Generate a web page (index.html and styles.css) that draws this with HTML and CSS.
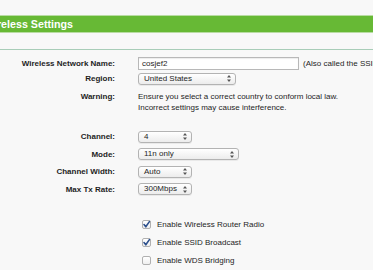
FILE: index.html
```html
<!DOCTYPE html>
<html lang="en">
<head>
    <meta charset="UTF-8">
    <meta name="viewport" content="width=device-width, initial-scale=1.0">
    <title>Wireless Settings</title>
    <link rel="stylesheet" href="styles.css">
</head>
<body>

    <div class="title-bar">
        <h1>Wireless Settings</h1>
    </div>
    <div class="title-rule"></div>

    <div class="settings">
        <div class="row row-name">
            <label class="field-label">Wireless Network Name:</label>
            <div class="text-input">cosjef2</div>
            <span class="hint">(Also called the SSID)</span>
        </div>
        <div class="row row-region">
            <label class="field-label">Region:</label>
            <div class="select select-region">
                <span>United States</span>
                <svg class="arrows" width="4" height="7" viewBox="0 0 4 7"><path d="M2 0 L4 2.6 L0 2.6 Z M0 4.4 L4 4.4 L2 7 Z"/></svg>
            </div>
        </div>
        <div class="row row-warning">
            <label class="field-label">Warning:</label>
            <p class="warning-text">Ensure you select a correct country to conform local law.<br>Incorrect settings may cause interference.</p>
        </div>

        <div class="radio-group">
            <div class="row row-select">
                <label class="field-label">Channel:</label>
                <div class="select select-sm">
                    <span>4</span>
                    <svg class="arrows" width="4" height="7" viewBox="0 0 4 7"><path d="M2 0 L4 2.6 L0 2.6 Z M0 4.4 L4 4.4 L2 7 Z"/></svg>
                </div>
            </div>
            <div class="row row-select">
                <label class="field-label">Mode:</label>
                <div class="select select-mode">
                    <span>11n only</span>
                    <svg class="arrows" width="4" height="7" viewBox="0 0 4 7"><path d="M2 0 L4 2.6 L0 2.6 Z M0 4.4 L4 4.4 L2 7 Z"/></svg>
                </div>
            </div>
            <div class="row row-select">
                <label class="field-label">Channel Width:</label>
                <div class="select select-sm">
                    <span>Auto</span>
                    <svg class="arrows" width="4" height="7" viewBox="0 0 4 7"><path d="M2 0 L4 2.6 L0 2.6 Z M0 4.4 L4 4.4 L2 7 Z"/></svg>
                </div>
            </div>
            <div class="row row-select">
                <label class="field-label">Max Tx Rate:</label>
                <div class="select select-sm">
                    <span>300Mbps</span>
                    <svg class="arrows" width="4" height="7" viewBox="0 0 4 7"><path d="M2 0 L4 2.6 L0 2.6 Z M0 4.4 L4 4.4 L2 7 Z"/></svg>
                </div>
            </div>
        </div>

        <div class="checks">
            <div class="check-row">
                <span class="checkbox checked">
                    <svg width="9" height="9" viewBox="0 0 9 9"><path d="M2 4.6 L3.8 6.8 L7.4 1.6" /></svg>
                </span>
                <span>Enable Wireless Router Radio</span>
            </div>
            <div class="check-row">
                <span class="checkbox checked">
                    <svg width="9" height="9" viewBox="0 0 9 9"><path d="M2 4.6 L3.8 6.8 L7.4 1.6" /></svg>
                </span>
                <span>Enable SSID Broadcast</span>
            </div>
            <div class="check-row">
                <span class="checkbox"></span>
                <span>Enable WDS Bridging</span>
            </div>
        </div>
    </div>

</body>
</html>
```

FILE: styles.css
```css
:root {
    --tp-green: #67b935;
    --rule-green: #a8cdb8;
    --page-bg: #f8f8f8;
    --text-dark: #1e1e1e;
    --field-border: #b8b8b8;
}

body {
    margin: 0;
    background-color: var(--page-bg);
    font-family: "Liberation Sans", Arial, sans-serif;
    font-size: 8px;
    color: var(--text-dark);
    overflow: hidden;
}

/* Green section header */
.title-bar {
    margin-top: 16px;
    height: 16px;
    background-color: var(--tp-green);
    box-shadow: 0 -1px 0 #b9dca3, 0 1px 0 #b9dca3;
    overflow: hidden;
}

.title-bar h1 {
    margin: 0 0 0 -16px;
    font-size: 10.7px;
    line-height: 16px;
    font-weight: bold;
    color: #ffffff;
    white-space: nowrap;
}

.title-rule {
    margin-top: 17px;
    height: 1px;
    background-color: var(--rule-green);
}

/* Form rows */
.settings {
    padding-top: 6px;
}

.row {
    display: flex;
    align-items: center;
    white-space: nowrap;
    overflow: hidden;
}

.row > * {
    flex-shrink: 0;
}

.field-label {
    width: 115px;
    margin-right: 23px;
    text-align: right;
    font-weight: bold;
}

.row-name { height: 15px; }
.row-region { height: 15px; }

.row-warning {
    align-items: flex-start;
    margin-top: 5px;
    line-height: 11px;
}

.row-warning .field-label {
    line-height: 11px;
}

.warning-text {
    margin: 0;
}

.text-input {
    box-sizing: border-box;
    width: 161px;
    height: 13px;
    line-height: 11px;
    padding: 0 3px;
    background-color: #ffffff;
    border: 1px solid var(--field-border);
    box-shadow: inset 0 1px 1px rgba(0,0,0,0.08);
}

.hint {
    margin-left: 4px;
}

/* Mac style popup buttons */
.select {
    box-sizing: border-box;
    height: 12px;
    display: flex;
    align-items: center;
    justify-content: space-between;
    padding: 0 4px 0 5px;
    border: 1px solid #b3b3b3;
    border-radius: 3px;
    background: linear-gradient(#ffffff, #ececec);
    box-shadow: 0 1px 0 rgba(0,0,0,0.06);
    line-height: 10px;
}

.select .arrows {
    fill: #555555;
    flex-shrink: 0;
}

.select-region { width: 98px; }
.select-mode { width: 101px; }
.select-sm { width: 54px; }

.radio-group {
    margin-top: 15px;
}

.row-select {
    height: 17.5px;
}

/* Checkboxes */
.checks {
    margin-top: 17px;
    padding-left: 142px;
}

.check-row {
    display: flex;
    align-items: center;
    height: 18px;
    white-space: nowrap;
}

.checkbox {
    box-sizing: border-box;
    width: 9px;
    height: 9px;
    margin-right: 6px;
    border: 1px solid #b0b0b0;
    border-radius: 2px;
    background: linear-gradient(#ffffff, #efefef);
    position: relative;
}

.checkbox svg {
    position: absolute;
    left: -1px;
    top: -1px;
}

.checkbox svg path {
    fill: none;
    stroke: #2c4f8c;
    stroke-width: 1.6;
    stroke-linecap: round;
    stroke-linejoin: round;
}
```
